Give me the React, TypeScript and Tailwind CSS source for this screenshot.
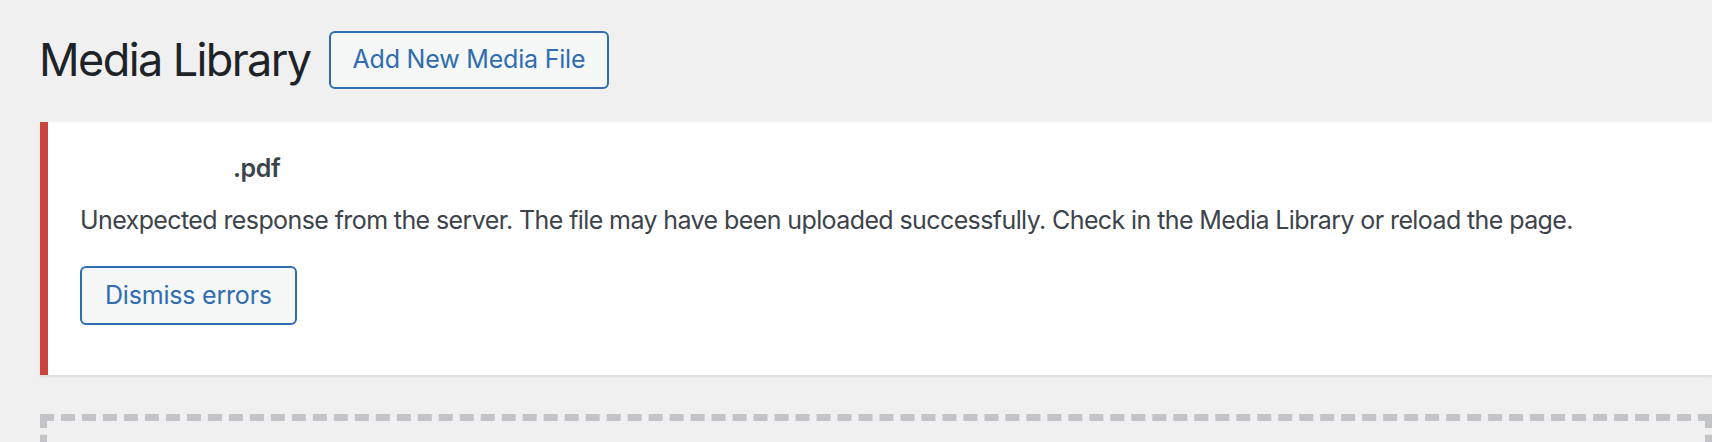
import React from 'react';

export default function App() {
  return (
    <div className="min-h-[442px] w-full overflow-hidden bg-[#f0f0f1] font-['Inter',sans-serif]">
      <div className="flex items-center gap-[18px] pl-[39px] pt-[31px]">
        <h1 className="text-[45px] leading-[58px] font-normal tracking-[-1.6px] text-[#1d2327]">Media Library</h1>
        <button className="h-[58px] rounded-[6px] border-2 border-[#2f6db0] bg-[#f6f7f7] px-[22px] text-[25px] tracking-[-0.2px] text-[#2f6db0]">
          Add New Media File
        </button>
      </div>

      <div className="mt-[33px] ml-[40px] border-l-[8px] border-[#c9443f] bg-white pt-[27px] pb-[50px] pl-[32px] shadow-[0_2px_2px_rgba(0,0,0,0.08)]">
        <p className="text-[25px] leading-[39px] font-semibold tracking-[-0.4px] text-[#3c434a]">
          <span className="inline-block w-[153px]" />
          .pdf
        </p>
        <p className="mt-[13px] text-[25px] leading-[39px] tracking-[-0.6px] text-[#3c434a]">
          Unexpected response from the server. The file may have been uploaded successfully. Check in the Media Library or reload the page.
        </p>
        <button className="mt-[26px] h-[59px] rounded-[6px] border-2 border-[#2f6db0] bg-[#f6f7f7] px-[23px] text-[25px] tracking-[-0.2px] text-[#2f6db0]">
          Dismiss errors
        </button>
      </div>

      <div className="mt-[39px] ml-[40px] h-[200px] border-[7px] border-dashed border-[#c3c4c7]" />
    </div>
  );
}
